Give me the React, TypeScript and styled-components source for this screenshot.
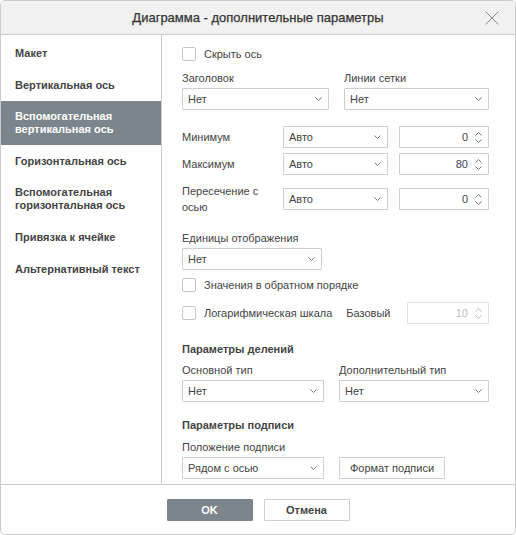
import styled, { createGlobalStyle } from "styled-components";

const GlobalStyle = createGlobalStyle`
  html, body {
    margin: 0;
    padding: 0;
    background: #ffffff;
  }
  body {
    font-family: "Liberation Sans", Arial, sans-serif;
    font-size: 11px;
    color: #444444;
  }
`;

const Dialog = styled.div`
  width: 516px;
  height: 535px;
  box-sizing: border-box;
  border: 1px solid #cbcbcb;
  border-radius: 5px;
  overflow: hidden;
  display: flex;
  flex-direction: column;
  background: #fff;
`;

const Header = styled.div`
  height: 34px;
  flex: none;
  box-sizing: border-box;
  background: #f1f1f1;
  border-bottom: 1px solid #cbcbcb;
  display: grid;
  grid-template-columns: 40px 1fr 40px;
  align-items: center;
`;

const Title = styled.div`
  grid-column: 2;
  text-align: center;
  font-size: 13px;
  font-weight: normal;
  color: #333;
  -webkit-text-stroke: 0.25px #333;
`;

const CloseButton = styled.div`
  display: flex;
  justify-content: flex-end;
  padding-right: 16px;
  padding-top: 1px;
`;

const Body = styled.div`
  flex: 1;
  display: flex;
  min-height: 0;
`;

const Sidebar = styled.div`
  width: 161px;
  box-sizing: border-box;
  flex: none;
  border-right: 1px solid #cbcbcb;
  padding-top: 2px;
`;

const NavItem = styled.div<{ active?: boolean; lines: number }>`
  padding: 9px 14px;
  line-height: ${({ lines }) => (lines > 1 ? 13 : 14)}px;
  font-weight: bold;
  font-size: 11px;
  color: ${({ active }) => (active ? "#ffffff" : "#444444")};
  background: ${({ active }) => (active ? "#7d858c" : "transparent")};
`;

const Content = styled.div`
  flex: 1;
  padding: 12px 27px 0 20px;
  display: flex;
  flex-direction: column;
`;

const CheckRow = styled.label<{ mt?: number }>`
  display: flex;
  align-items: center;
  gap: 8px;
  height: 14px;
  white-space: nowrap;
  margin-top: ${({ mt }) => mt ?? 0}px;
`;

const Box = styled.span`
  width: 14px;
  height: 14px;
  box-sizing: border-box;
  border: 1px solid #c8c8c8;
  border-radius: 2px;
  background: #fff;
  flex: none;
`;

const Label = styled.div`
  line-height: 13px;
  margin-bottom: 3px;
  white-space: nowrap;
`;

const Heading = styled.div<{ mt: number }>`
  font-weight: bold;
  line-height: 13px;
  margin-top: ${({ mt }) => mt}px;
`;

const Columns = styled.div<{ cols: string; mt: number }>`
  display: grid;
  grid-template-columns: ${({ cols }) => cols};
  align-items: end;
  margin-top: ${({ mt }) => mt}px;
`;

const SelectBox = styled.div<{ w?: number }>`
  width: ${({ w }) => (w ? `${w}px` : "auto")};
  height: 22px;
  box-sizing: border-box;
  border: 1px solid #cfcfcf;
  border-radius: 1px;
  display: flex;
  align-items: center;
  justify-content: space-between;
  padding: 0 6px 0 5px;
  color: #444;
  background: #fff;
`;

const SpinBox = styled.div<{ disabled?: boolean }>`
  height: 22px;
  box-sizing: border-box;
  border: 1px solid ${({ disabled }) => (disabled ? "#e0e0e0" : "#cfcfcf")};
  border-radius: 1px;
  display: flex;
  align-items: center;
  justify-content: flex-end;
  gap: 7px;
  padding-right: 6px;
  color: ${({ disabled }) => (disabled ? "#bdbdbd" : "#444")};
`;

const Arrows = styled.div<{ faded?: boolean }>`
  display: flex;
  flex-direction: column;
  gap: 3px;
  opacity: ${({ faded }) => (faded ? 0.5 : 1)};
`;

const ParamRow = styled.div<{ mt: number; h?: number }>`
  display: grid;
  grid-template-columns: 101px 105px 11px 1fr;
  align-items: center;
  min-height: ${({ h }) => h ?? 22}px;
  margin-top: ${({ mt }) => mt}px;
`;

const ParamLabel = styled.div`
  line-height: 16px;
`;

const LogRow = styled.div`
  display: flex;
  align-items: center;
  margin-top: 10px;
  height: 22px;
`;

const BaseLabel = styled.span`
  margin-left: 14px;
  margin-right: 17px;
  color: #444;
`;

const BaseSpin = styled.div`
  flex: 1;
`;

const Button = styled.div<{ primary?: boolean; w?: number; plain?: boolean }>`
  width: ${({ w }) => w ?? 86}px;
  height: 22px;
  box-sizing: border-box;
  display: flex;
  align-items: center;
  justify-content: center;
  font-weight: ${({ plain }) => (plain ? "normal" : "bold")};
  font-size: 11px;
  color: ${({ primary }) => (primary ? "#fff" : "#444")};
  background: ${({ primary }) => (primary ? "#7d858c" : "#fff")};
  border: 1px solid ${({ primary }) => (primary ? "#7d858c" : "#cfcfcf")};
  border-radius: 1px;
`;

const Footer = styled.div`
  height: 50px;
  flex: none;
  box-sizing: border-box;
  border-top: 1px solid #cbcbcb;
  display: flex;
  justify-content: center;
  align-items: center;
  gap: 11px;
`;

const Chevron = ({ up }: { up?: boolean }) => (
  <svg width="7" height="4" viewBox="0 0 7 4" style={{ display: "block" }}>
    <path
      d={up ? "M0.5 3.5 L3.5 0.5 L6.5 3.5" : "M0.5 0.5 L3.5 3.5 L6.5 0.5"}
      fill="none"
      stroke="#777"
      strokeWidth="1"
    />
  </svg>
);

const Select = ({ value, w }: { value: string; w?: number }) => (
  <SelectBox w={w}>
    <span>{value}</span>
    <Chevron />
  </SelectBox>
);

const Spin = ({ value, disabled }: { value: string; disabled?: boolean }) => (
  <SpinBox disabled={disabled}>
    <span>{value}</span>
    <Arrows faded={disabled}>
      <Chevron up />
      <Chevron />
    </Arrows>
  </SpinBox>
);

const navItems = [
  "Макет",
  "Вертикальная ось",
  "Вспомогательная\nвертикальная ось",
  "Горизонтальная ось",
  "Вспомогательная\nгоризонтальная ось",
  "Привязка к ячейке",
  "Альтернативный текст",
];

export default function App() {
  return (
    <>
      <GlobalStyle />
      <Dialog>
        <Header>
          <Title>Диаграмма - дополнительные параметры</Title>
          <CloseButton>
            <svg width="14" height="14" viewBox="0 0 14 14">
              <path d="M0.5 0.5 L13.5 13.5 M13.5 0.5 L0.5 13.5" stroke="#8a8a8a" strokeWidth="1" />
            </svg>
          </CloseButton>
        </Header>
        <Body>
          <Sidebar>
            {navItems.map((item, i) => {
              const lines = item.split("\n");
              return (
                <NavItem key={item} active={i === 2} lines={lines.length}>
                  {lines.map((line) => (
                    <div key={line}>{line}</div>
                  ))}
                </NavItem>
              );
            })}
          </Sidebar>
          <Content>
            <CheckRow>
              <Box />
              Скрыть ось
            </CheckRow>

            <Columns cols="147px 15px 145px" mt={11}>
              <div>
                <Label>Заголовок</Label>
                <Select value="Нет" />
              </div>
              <div />
              <div>
                <Label>Линии сетки</Label>
                <Select value="Нет" />
              </div>
            </Columns>

            <ParamRow mt={16}>
              <ParamLabel>Минимум</ParamLabel>
              <Select value="Авто" />
              <div />
              <Spin value="0" />
            </ParamRow>
            <ParamRow mt={5}>
              <ParamLabel>Максимум</ParamLabel>
              <Select value="Авто" />
              <div />
              <Spin value="80" />
            </ParamRow>
            <ParamRow mt={8} h={32}>
              <ParamLabel>
                Пересечение с<br />осью
              </ParamLabel>
              <Select value="Авто" />
              <div />
              <Spin value="0" />
            </ParamRow>

            <div style={{ marginTop: 17 }}>
              <Label>Единицы отображения</Label>
              <Select value="Нет" w={140} />
            </div>

            <CheckRow mt={8}>
              <Box />
              Значения в обратном порядке
            </CheckRow>

            <LogRow>
              <CheckRow>
                <Box />
                Логарифмическая шкала
              </CheckRow>
              <BaseLabel>Базовый</BaseLabel>
              <BaseSpin>
                <Spin value="10" disabled />
              </BaseSpin>
            </LogRow>

            <Heading mt={19}>Параметры делений</Heading>
            <Columns cols="142px 15px 150px" mt={8}>
              <div>
                <Label>Основной тип</Label>
                <Select value="Нет" />
              </div>
              <div />
              <div>
                <Label>Дополнительный тип</Label>
                <Select value="Нет" />
              </div>
            </Columns>

            <Heading mt={17}>Параметры подписи</Heading>
            <Columns cols="142px 15px 106px" mt={9}>
              <div>
                <Label>Положение подписи</Label>
                <Select value="Рядом с осью" />
              </div>
              <div />
              <Button w={106} plain>
                Формат подписи
              </Button>
            </Columns>
          </Content>
        </Body>
        <Footer>
          <Button primary>OK</Button>
          <Button>Отмена</Button>
        </Footer>
      </Dialog>
    </>
  );
}
